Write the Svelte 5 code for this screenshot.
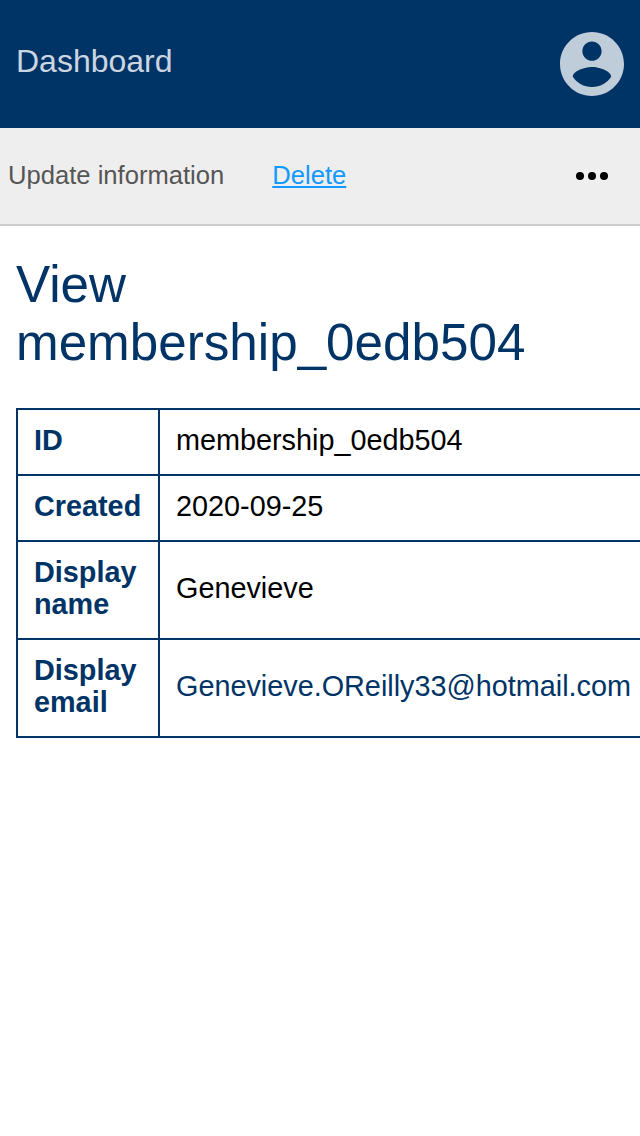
<script>
  const rows = [
    ['ID', 'membership_0edb504'],
    ['Created', '2020-09-25'],
    ['Display name', 'Genevieve'],
    ['Display email', 'Genevieve.OReilly33@hotmail.com'],
  ];
</script>

<header>
  <span>Dashboard</span>
  <svg class="avatar" viewBox="2 2 20 20" aria-label="Account">
    <path d="M12 2C6.48 2 2 6.48 2 12s4.48 10 10 10 10-4.48 10-10S17.52 2 12 2zm0 3c1.66 0 3 1.34 3 3s-1.34 3-3 3-3-1.34-3-3 1.34-3 3-3zm0 14.2c-2.5 0-4.71-1.28-6-3.22.03-1.99 4-3.08 6-3.08 1.99 0 5.97 1.09 6 3.08-1.29 1.94-3.5 3.22-6 3.22z" />
  </svg>
</header>
<nav>
  <span class="update">Update information</span>
  <a href="#delete">Delete</a>
  <svg class="more" viewBox="0 0 32 8" aria-label="More">
    <circle cx="4" cy="4" r="4" /><circle cx="16" cy="4" r="4" /><circle cx="28" cy="4" r="4" />
  </svg>
</nav>
<main>
  <h1>View membership_0edb504</h1>
  <table>
    <tbody>
      {#each rows as [label, value], i}
        <tr><th>{label}</th><td class:email={i === 3}>{value}</td></tr>
      {/each}
    </tbody>
  </table>
</main>

<style>
  :global(body) {
    font-family: "Liberation Sans", Arial, sans-serif;
    background: #fff;
    overflow: hidden;
  }
  header {
    box-sizing: border-box;
    height: 128px;
    padding: 0 16px;
    background: #003366;
    color: #ccd6e0;
    font-size: 32px;
    display: flex;
    align-items: center;
    justify-content: space-between;
  }
  header span { padding-bottom: 6px; }
  .avatar { width: 64px; height: 64px; fill: #bfccd9; }
  nav {
    box-sizing: border-box;
    height: 98px;
    padding: 0 32px 0 8px;
    border-bottom: 2px solid #ccc;
    background: #eee;
    display: flex;
    align-items: center;
    font-size: 25.6px;
  }
  .update, a { padding-bottom: 2px; }
  .update { color: #555; margin-right: 48px; }
  a {
    color: #1199ff;
    text-decoration: underline;
    text-decoration-thickness: 2px;
    text-underline-offset: 2px;
    text-decoration-skip-ink: none;
  }
  .more { width: 32px; height: 8px; margin-left: auto; }
  main { padding: 30px 16px 0; color: #003366; }
  h1 {
    margin: 0 0 36px;
    width: 540px;
    font-size: 51.2px;
    line-height: 58px;
    font-weight: 400;
  }
  table {
    width: 630px;
    border-collapse: collapse;
    table-layout: fixed;
    font-size: 28.8px;
    line-height: 32px;
  }
  th, td { padding: 14px 16px 18px; border: 2px solid #003366; text-align: left; }
  th { width: 108px; font-weight: 700; }
  td { color: #000; }
  .email { color: #003366; }
</style>
